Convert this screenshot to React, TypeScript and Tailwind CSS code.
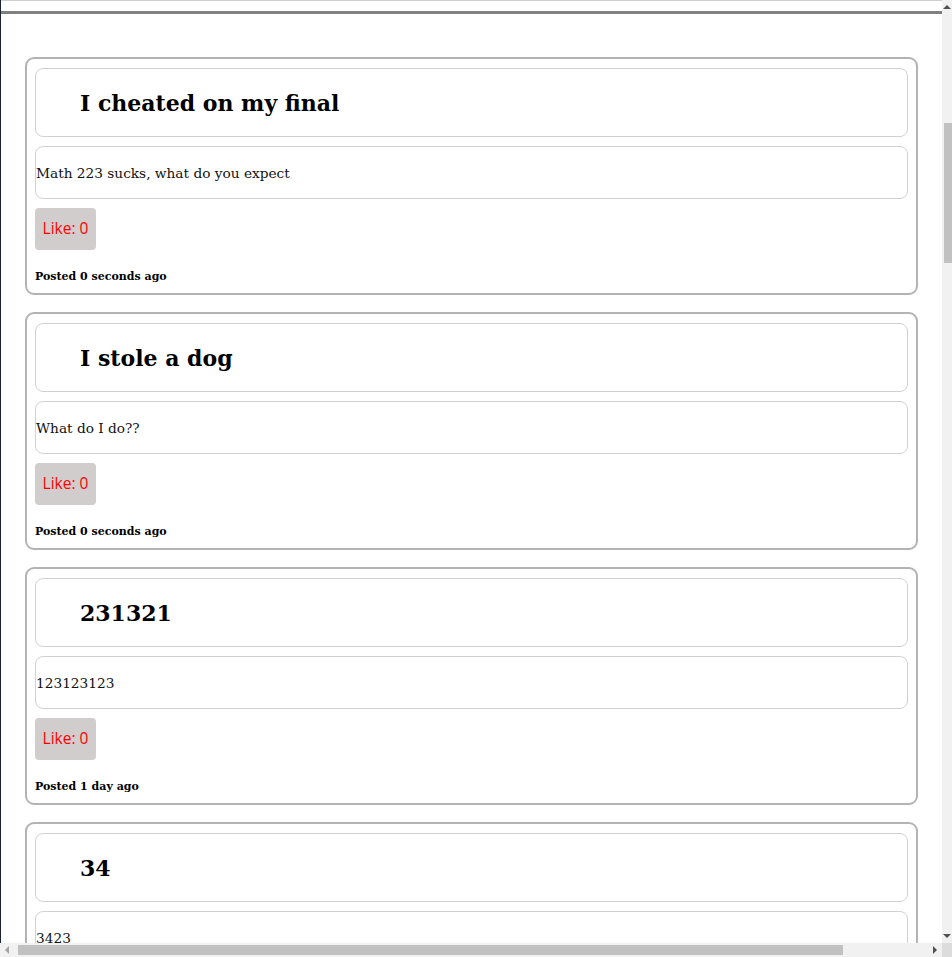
import React from 'react';

interface Post {
    title: string;
    body: string;
    likes: number;
    posted: string;
}

const posts: Post[] = [
    { title: 'I cheated on my final', body: 'Math 223 sucks, what do you expect', likes: 0, posted: 'Posted 0 seconds ago' },
    { title: 'I stole a dog', body: 'What do I do??', likes: 0, posted: 'Posted 0 seconds ago' },
    { title: '231321', body: '123123123', likes: 0, posted: 'Posted 1 day ago' },
    { title: '34', body: '3423', likes: 0, posted: 'Posted 1 day ago' },
];

const serif = "font-['DejaVu_Serif','Liberation_Serif',serif]";

function PostCard({ post }: { post: Post }) {
    return (
        <div className="shrink-0 rounded-[9px] border-2 border-[#b3b3b3] pt-[9px] px-[8px] pb-[8px] flex flex-col">
            <div className="h-[69px] rounded-[8px] border border-[#d4d0d0] pl-[44px] flex items-center">
                <h2 className={`${serif} text-[22px] font-bold text-black pt-[1px]`}>{post.title}</h2>
            </div>
            <div className="mt-[9px] h-[53px] rounded-[8px] border border-[#d4d0d0] flex items-center">
                <p className={`${serif} text-[13.7px] text-[#111] pt-[1px]`}>{post.body}</p>
            </div>
            <div className="mt-[9px]">
                <button className="h-[42px] w-[61px] rounded-[4px] bg-[#d1cdcd] text-[#ff0000] text-[15.5px] font-['Open_Sans','Noto_Sans',sans-serif]">
                    Like: {post.likes}
                </button>
            </div>
            <p className={`${serif} mt-[18px] text-[11px] leading-[17px] font-bold text-black`}>{post.posted}</p>
        </div>
    );
}

export default function App() {
    return (
        <div className="w-[952px] h-[957px] overflow-hidden bg-white flex flex-col">
            <div className="flex-1 min-h-0 flex">
                <div className="flex-1 min-w-0 border-l border-[#1c2230] flex flex-col overflow-hidden">
                    <div className="h-px bg-[#cfcfcf] shrink-0" />
                    <div className="mt-[10px] h-[3px] bg-[#808080] shrink-0" />
                    <div className="pt-[43px] px-[24px] flex flex-col gap-[17px]">
                        {posts.map((p) => (
                            <PostCard key={p.title} post={p} />
                        ))}
                    </div>
                </div>
                {/* vertical scrollbar */}
                <div className="w-[10px] shrink-0 bg-[#f1f1f1] flex flex-col">
                    <div className="h-[14px] flex items-center justify-end pr-[1px]">
                        <div className="w-0 h-0 border-l-[4px] border-r-[4px] border-b-[4px] border-l-transparent border-r-transparent border-b-[#505050]" />
                    </div>
                    <div className="flex-1 pl-[2px] pt-[109px]">
                        <div className="h-[140px] bg-[#c1c1c1]" />
                    </div>
                    <div className="h-[14px] flex items-center justify-end pr-[1px]">
                        <div className="w-0 h-0 border-l-[4px] border-r-[4px] border-t-[4px] border-l-transparent border-r-transparent border-t-[#505050]" />
                    </div>
                </div>
            </div>
            {/* horizontal scrollbar */}
            <div className="h-[14px] shrink-0 bg-[#f1f1f1] flex items-center">
                <div className="w-[14px] h-full flex items-center justify-center">
                    <div className="w-0 h-0 border-t-[4px] border-b-[4px] border-r-[4px] border-t-transparent border-b-transparent border-r-[#a3a3a3]" />
                </div>
                <div className="ml-[4px] w-[825px] h-[10px] bg-[#c1c1c1]" />
                <div className="flex-1" />
                <div className="w-[14px] h-full flex items-center justify-center">
                    <div className="w-0 h-0 border-t-[4px] border-b-[4px] border-l-[4px] border-t-transparent border-b-transparent border-l-[#505050]" />
                </div>
                <div className="w-[10px] h-full bg-[#dcdcdc]" />
            </div>
        </div>
    );
}
